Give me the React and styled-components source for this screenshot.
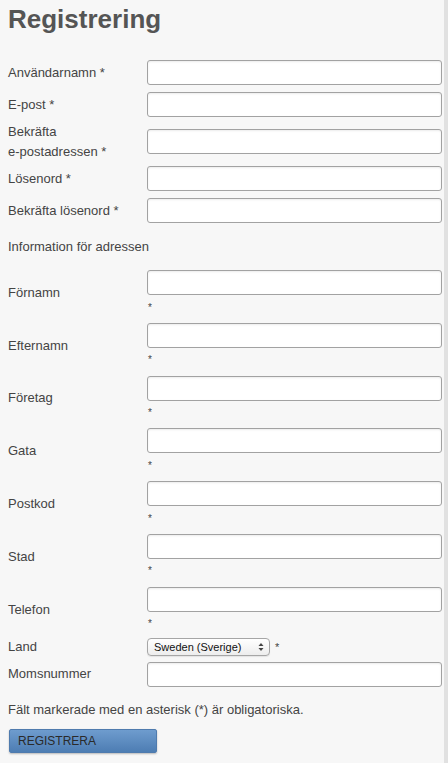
import React from 'react';
import styled, { createGlobalStyle } from 'styled-components';

const GlobalStyle = createGlobalStyle`
    body {
        margin: 0;
        background: #f7f7f7;
        font-family: "Liberation Sans", Arial, Helvetica, sans-serif;
        font-size: 13px;
        color: #444;
    }
`

const accountFields = [
    { label: 'Användarnamn *' },
    { label: 'E-post *' },
    { label: 'Bekräfta e-postadressen *', lines: ['Bekräfta', 'e-postadressen *'] },
    { label: 'Lösenord *', type: 'password' },
    { label: 'Bekräfta lösenord *', type: 'password' },
]

const addressFields = ['Förnamn', 'Efternamn', 'Företag', 'Gata', 'Postkod', 'Stad', 'Telefon']

function App() {
    return (
        <Page>
            <GlobalStyle />
            <Title>Registrering</Title>

            <Form onSubmit={(e) => e.preventDefault()}>
                {accountFields.map((f) => (
                    <Row key={f.label}>
                        <Label>
                            {f.lines ? f.lines.map((l) => <div key={l}>{l}</div>) : f.label}
                        </Label>
                        <Field>
                            <Input type={f.type || 'text'} />
                        </Field>
                    </Row>
                ))}

                <Section>Information för adressen</Section>

                {addressFields.map((name) => (
                    <Row key={name}>
                        <Label>{name}</Label>
                        <Field>
                            <Input type="text" />
                            <Required>*</Required>
                        </Field>
                    </Row>
                ))}

                <Row>
                    <Label>Land</Label>
                    <Field $inline>
                        <SelectWrap>
                            <Select defaultValue="SE">
                                <option value="SE">Sweden (Sverige)</option>
                            </Select>
                            <Arrows viewBox="0 0 6 10" width="6" height="10">
                                <path d="M0.5 4 L3 1 L5.5 4 Z" fill="#444" />
                                <path d="M0.5 6 L3 9 L5.5 6 Z" fill="#444" />
                            </Arrows>
                        </SelectWrap>
                        <InlineStar>*</InlineStar>
                    </Field>
                </Row>

                <Row>
                    <Label>Momsnummer</Label>
                    <Field>
                        <Input type="text" />
                    </Field>
                </Row>

                <Note>Fält markerade med en asterisk (*) är obligatoriska.</Note>

                <Button type="submit">REGISTRERA</Button>
            </Form>
        </Page>
    );
}

const Page = styled.div`
    width: 448px;
    min-height: 763px;
    box-sizing: border-box;
    padding: 3px 2px 0 8px;
    border-right: 4px solid #e1e1e1;
    background: #f7f7f7;
`
const Title = styled.h1`
    margin: 0;
    font-size: 26px;
    line-height: 32px;
    font-weight: bold;
    color: #555;
`
const Form = styled.form`
    margin-top: 21.5px;
`
const Row = styled.div`
    display: grid;
    grid-template-columns: 139px 295px;
    align-items: center;
    padding: 1px 0;
`
const Label = styled.label`
    line-height: 20px;
    color: #444;
`
const Field = styled.div`
    display: ${(p) => (p.$inline ? 'flex' : 'block')};
    align-items: center;
    min-height: 20px;
`
const Input = styled.input`
    display: block;
    box-sizing: border-box;
    width: 295px;
    height: 25px;
    margin: 2.5px 0;
    padding: 0 6px;
    border: 1px solid #a2a2a2;
    border-radius: 3px;
    background: #fff;
    box-shadow: inset 0 1px 2px rgba(0, 0, 0, 0.08);
    font: inherit;
    outline: none;
`
const Required = styled.div`
    font-size: 10px;
    line-height: 20.8px;
    padding-left: 1px;
    color: #444;
`
const Section = styled.div`
    padding: 10px 0;
    line-height: 20px;
    color: #444;
`
const SelectWrap = styled.div`
    position: relative;
    width: 123px;
    height: 18px;
`
const Select = styled.select`
    appearance: none;
    -webkit-appearance: none;
    box-sizing: border-box;
    width: 123px;
    height: 18px;
    margin: 0;
    padding: 0 0 0 6px;
    border: 1px solid #a6a6a6;
    border-radius: 4px;
    background: linear-gradient(#ffffff, #ededed);
    box-shadow: 0 1px 1px rgba(0, 0, 0, 0.08);
    font-family: "Liberation Sans", Arial, sans-serif;
    font-size: 11px;
    color: #111;
`
const Arrows = styled.svg`
    position: absolute;
    right: 6px;
    top: 4px;
    pointer-events: none;
`
const InlineStar = styled.span`
    margin-left: 5px;
    font-size: 11px;
    line-height: 20px;
    align-self: flex-start;
`
const Note = styled.p`
    margin: 10px 0 0;
    line-height: 20px;
    color: #444;
`
const Button = styled.button`
    display: block;
    margin: 9px 0 0 1px;
    width: 148px;
    height: 24px;
    padding: 0 0 0 8px;
    text-align: left;
    border: 1px solid #4f7bae;
    border-radius: 2px;
    background: linear-gradient(#6e9cce, #4d7db3);
    box-shadow: 0 1px 2px rgba(0, 0, 0, 0.25);
    font-family: "Liberation Sans", Arial, sans-serif;
    font-size: 12px;
    color: #2a2a2a;
    cursor: pointer;
`

export default App;
